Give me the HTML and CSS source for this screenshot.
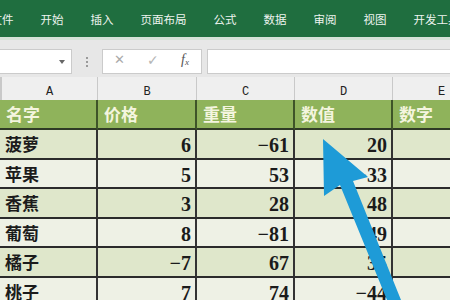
FILE: index.html
```html
<!DOCTYPE html>
<html lang="zh">
<head>
<meta charset="utf-8">
<link rel="stylesheet" href="styles.css">
</head>
<body>
<div class="page">
  <div class="ribbon">
    <span class="tab first">文件</span>
    <span class="tab">开始</span>
    <span class="tab">插入</span>
    <span class="tab">页面布局</span>
    <span class="tab">公式</span>
    <span class="tab">数据</span>
    <span class="tab">审阅</span>
    <span class="tab">视图</span>
    <span class="tab">开发工具</span>
  </div>
  <div class="strip"></div>
  <div class="fbar">
    <div class="namebox"><span class="caret"></span></div>
    <div class="dots"><i></i><i></i><i></i></div>
    <div class="fxbox">
      <span class="x">✕</span>
      <span class="ok">✓</span>
      <span class="fx">f<sub>x</sub></span>
    </div>
    <div class="input"></div>
  </div>
  <div class="grid">
    <div class="ch">A</div><div class="ch">B</div><div class="ch">C</div><div class="ch">D</div><div class="ch">E</div>

    <div class="hd">名字</div><div class="hd">价格</div><div class="hd">重量</div><div class="hd">数值</div><div class="hd">数字</div>

    <div class="c name odd">菠萝</div><div class="c num odd">6</div><div class="c num odd">−61</div><div class="c num odd">20</div><div class="c odd"></div>
    <div class="c name even">苹果</div><div class="c num even">5</div><div class="c num even">53</div><div class="c num even">−33</div><div class="c even"></div>
    <div class="c name odd">香蕉</div><div class="c num odd">3</div><div class="c num odd">28</div><div class="c num odd">48</div><div class="c odd"></div>
    <div class="c name even">葡萄</div><div class="c num even">8</div><div class="c num even">−81</div><div class="c num even">49</div><div class="c even"></div>
    <div class="c name odd">橘子</div><div class="c num odd">−7</div><div class="c num odd">67</div><div class="c num odd">35</div><div class="c odd"></div>
    <div class="c name even">桃子</div><div class="c num even">7</div><div class="c num even">74</div><div class="c num even">−44</div><div class="c even"></div>
  </div>
  <svg class="arrow" width="450" height="300" viewBox="0 0 450 300">
    <polygon points="323,139 368,177 353,181 401,300 387,300 340,185 324,196" fill="#1e9bd7"/>
  </svg>
</div>
</body>
</html>
```
FILE: styles.css
```css
* { box-sizing: border-box; }
html, body { margin: 0; padding: 0; }
body { width: 450px; height: 300px; overflow: hidden; background: #fff; }
.page { position: relative; width: 450px; height: 300px; overflow: hidden; }

.ribbon {
  height: 37px;
  background: #1f6e3f;
  display: flex;
  align-items: center;
  white-space: nowrap;
  font-family: "Noto Sans CJK SC", sans-serif;
  font-size: 11.5px;
  color: #eef4ef;
}
.tab { padding: 0 13.5px; flex: none; }
.tab.first { margin-left: -23px; }

.strip { height: 3px; background: #d5e2d8; }

.fbar {
  height: 37px;
  background: #e7e7e7;
  display: flex;
  align-items: flex-start;
  padding-top: 9px;
}
.namebox {
  width: 72px; height: 25px;
  background: #fff;
  border: 1px solid #cbcbcb;
  border-left: none;
  position: relative;
  flex: none;
}
.caret {
  position: absolute; right: 6px; top: 10px;
  width: 0; height: 0;
  border-left: 3.5px solid transparent;
  border-right: 3.5px solid transparent;
  border-top: 4px solid #666;
}
.dots {
  width: 30px; height: 25px;
  display: flex; flex-direction: column; align-items: center; justify-content: center;
  gap: 2px;
  flex: none;
}
.dots i { width: 2px; height: 2px; background: #9a9a9a; display: block; }
.fxbox {
  width: 100px; height: 25px;
  background: #fff;
  border: 1px solid #cbcbcb;
  display: flex; align-items: center;
  flex: none;
  position: relative;
  color: #b0b0b0;
}
.fxbox .x { position: absolute; left: 11px; top: 2px; font-family: "DejaVu Sans", sans-serif; font-size: 13px; color: #aaa; }
.fxbox .ok { position: absolute; left: 44px; top: 2px; font-family: "DejaVu Sans", sans-serif; font-size: 14px; color: #b5b5b5; }
.fxbox .fx { position: absolute; left: 78px; top: 2px; font-family: "Liberation Serif", serif; font-style: italic; font-size: 14px; color: #555; }
.fxbox .fx sub { font-size: 9px; vertical-align: -1px; }
.input {
  margin-left: 5px;
  flex: 1;
  height: 25px;
  background: #fff;
  border: 1px solid #cbcbcb;
  border-right: none;
}

.grid {
  display: grid;
  grid-template-columns: 98px 99px 98px 98px 98px;
  grid-template-rows: 23px 30px repeat(6, 29.5px);
  width: 491px;
}
.ch {
  background: #efefef;
  border-right: 1px solid #c9c9c9;
  font-family: "Liberation Mono", monospace;
  font-size: 12px;
  color: #222;
  text-align: center;
  padding-top: 9px;
  line-height: 12px;
}
.ch:first-child { border-left: 2px solid #c9c9c9; }
.hd {
  background: #8fb35b;
  border-right: 2px solid #3e5428;
  border-bottom: 2px solid #2f3a26;
  font-family: "Noto Sans CJK SC", sans-serif;
  font-weight: 700;
  font-size: 17px;
  color: #f4f5df;
  padding: 2px 0 0 6px;
  line-height: 24px;
}
.c {
  border-right: 2px solid #333;
  border-bottom: 2px solid #2b2b2b;
  color: #1b1b1b;
}
.odd { background: #dfe7cb; }
.even { background: #eef1e5; }
.name {
  font-family: "Noto Sans CJK SC", sans-serif;
  font-weight: 700;
  font-size: 17px;
  padding: 2px 0 0 5px;
  line-height: 24px;
}
.num {
  font-family: "Liberation Serif", serif;
  font-weight: 700;
  font-size: 20px;
  text-align: right;
  padding: 3px 4px 0 0;
  line-height: 24px;
}

.arrow { position: absolute; left: 0; top: 0; pointer-events: none; }
```
